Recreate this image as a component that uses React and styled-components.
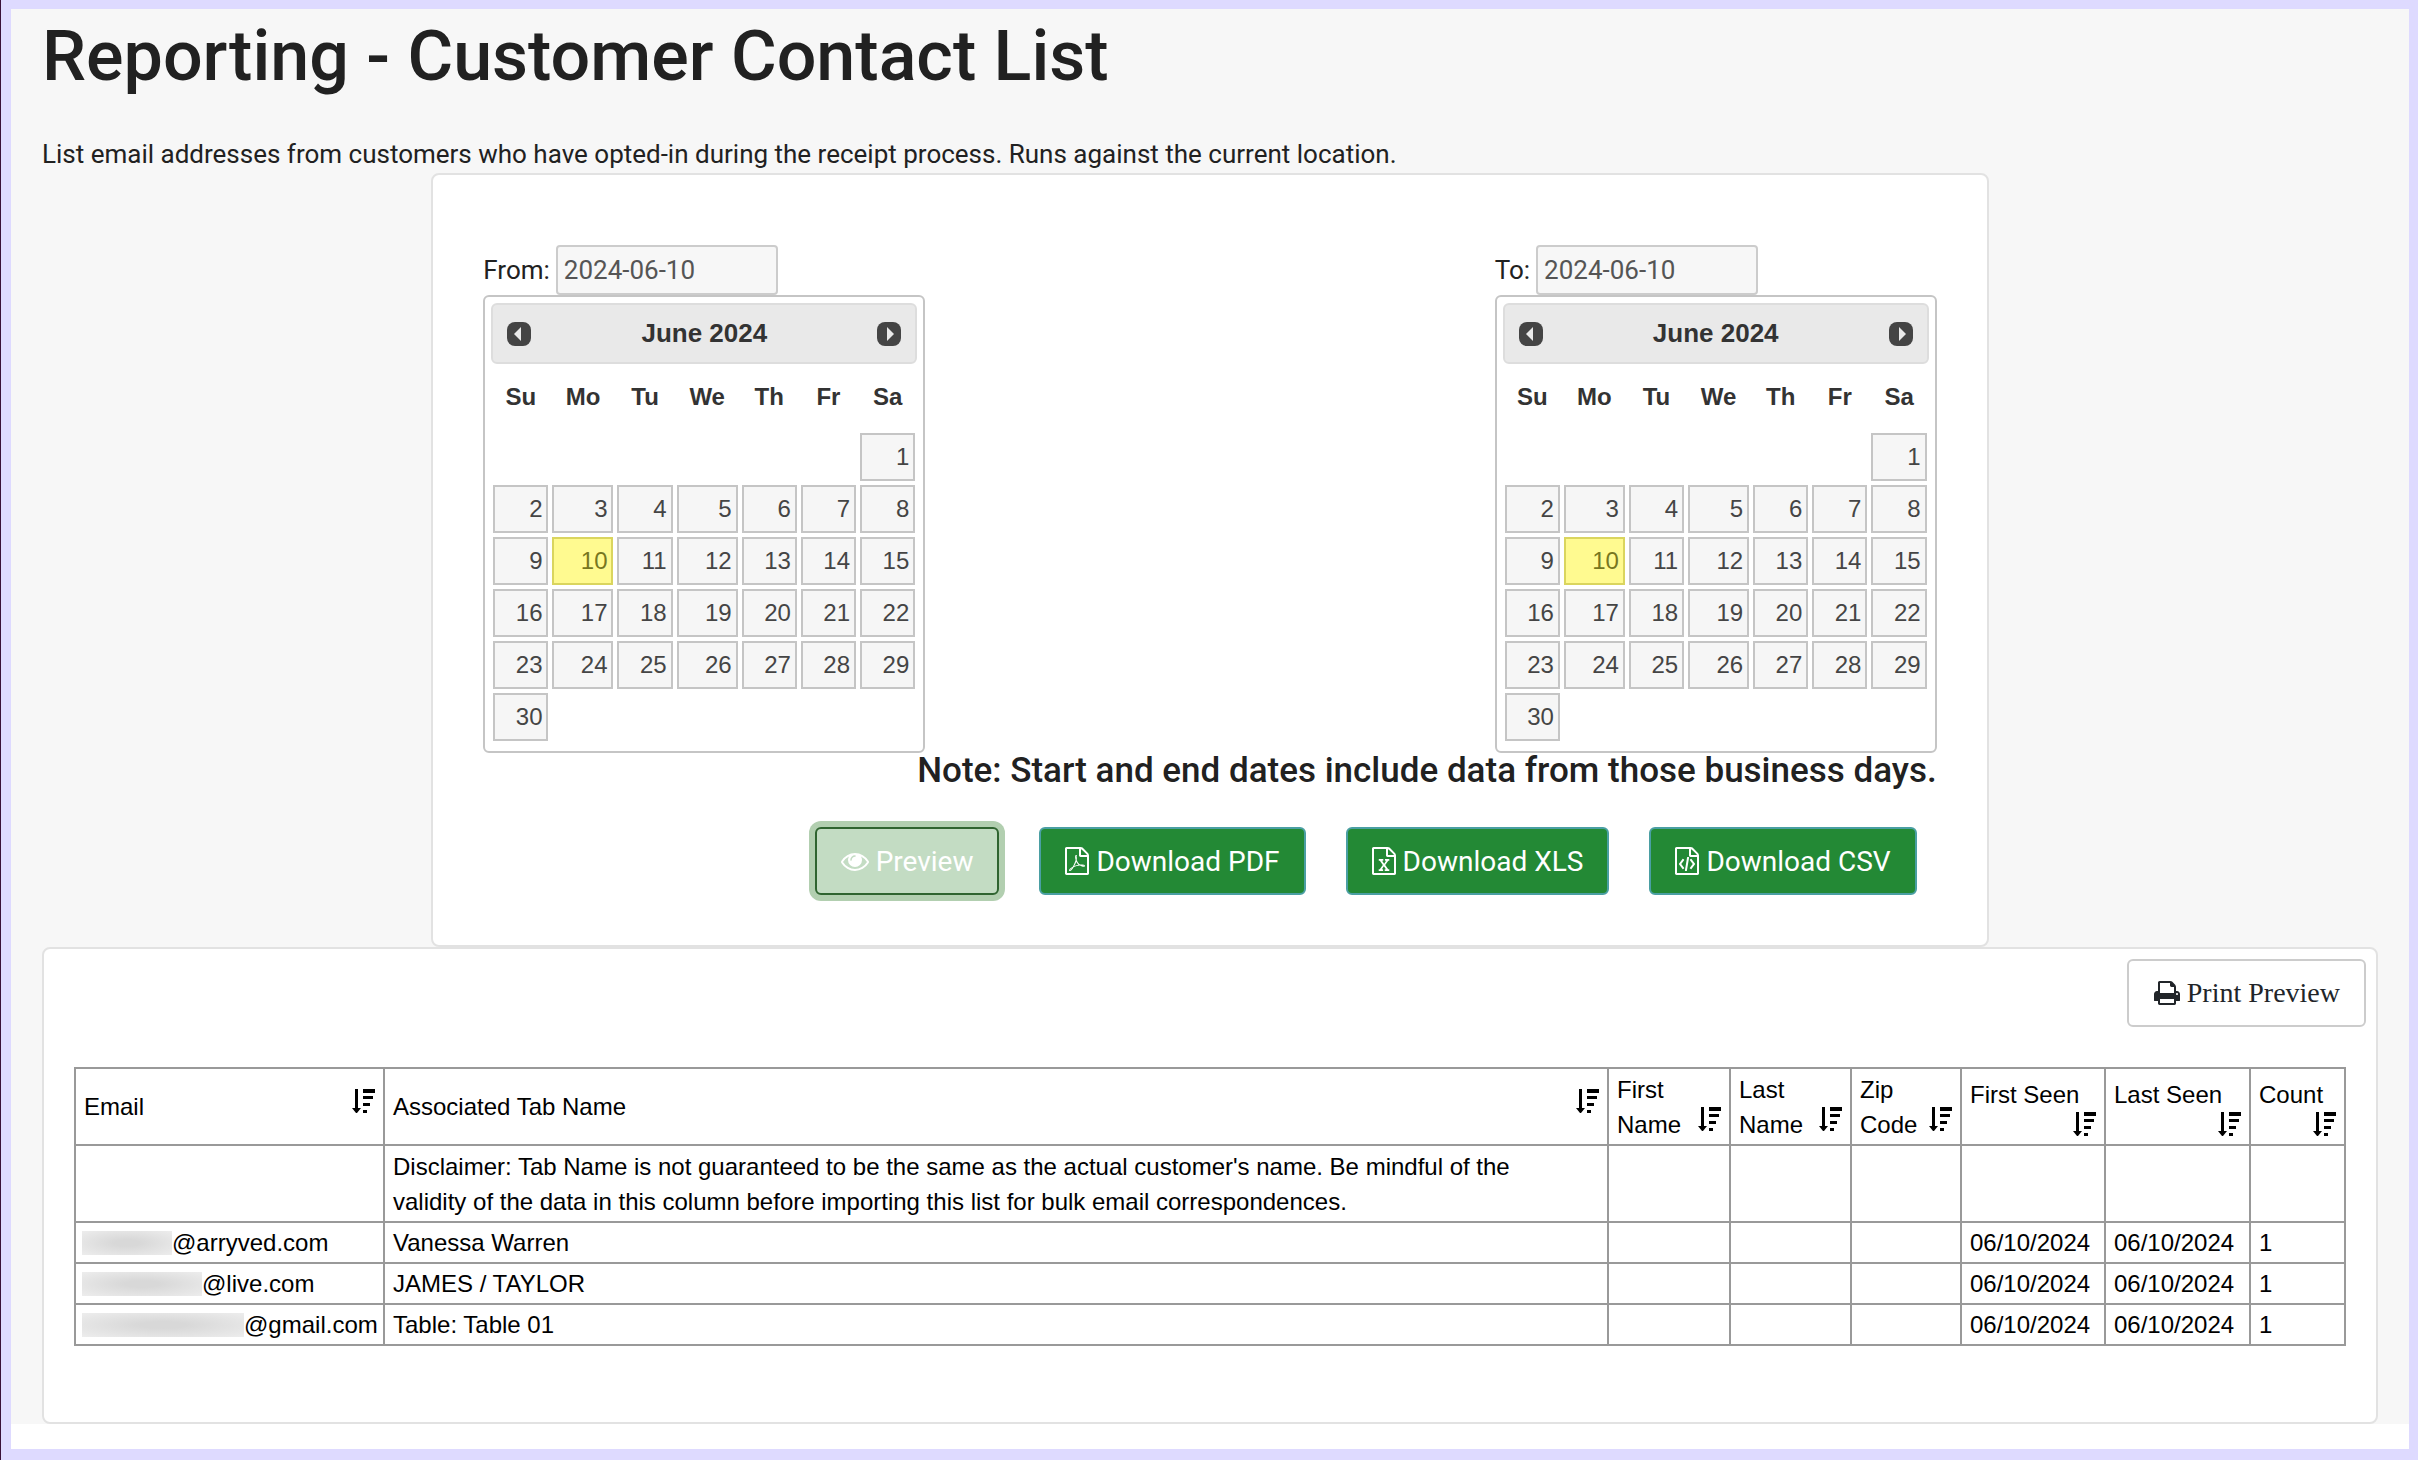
import React, { useState } from 'react'
import styled, { createGlobalStyle, css } from 'styled-components'

const GlobalStyle = createGlobalStyle`
  * {
    box-sizing: border-box;
  }
  body {
    margin: 0;
    background: #3a1038;
    color: #212121;
    font-family: Roboto, "Liberation Sans", sans-serif;
    font-size: 26px;
  }
`

const Frame = styled.div`
  min-height: 100vh;
  margin-left: 1px;
  padding-bottom: 25px;
  border: solid #dedaff;
  border-width: 9px 9px 11px 10px;
  background: #fff;
`

const Page = styled.main`
  padding: 7px 31px 0;
  background: #f7f7f7;
`

const Title = styled.h1`
  margin: 0 0 39px;
  font-size: 70px;
  font-weight: 500;
  line-height: 80px;
`

const Description = styled.p`
  margin: 0;
  line-height: 38px;
`

const Card = styled.section`
  border: 2px solid #e2e2e2;
  border-radius: 8px;
  background: #fff;
`

const FilterCard = styled(Card)`
  width: 66.67%;
  margin: 0 auto;
  padding: 70px 50px 50px;
`

const ResultCard = styled(Card)`
  padding: 10px 10px 76px;
`

const Pickers = styled.div`
  display: flex;
  justify-content: space-between;
`

const Picker = styled.div`
  width: 442px;
`

const Field = styled.div`
  display: flex;
  align-items: center;
  gap: 6px;
  height: 50px;
`

const DateInput = styled.input`
  width: 222px;
  height: 50px;
  padding: 0 6px;
  border: 2px solid #ccc;
  border-radius: 4px;
  background: #f7f7f7;
  color: #555;
  font: inherit;
`

const CalendarBox = styled.div`
  padding: 6px 6px 8px;
  border: 2px solid #c5c5c5;
  border-radius: 6px;
  background: #fff;
  color: #333;
  font-family: "Liberation Sans", Arial, sans-serif;
`

const CalendarHead = styled.div`
  display: flex;
  align-items: center;
  justify-content: space-between;
  height: 61px;
  padding: 0 14px;
  border: 2px solid #ddd;
  border-radius: 6px;
  background: #e9e9e9;
  font-weight: bold;
`

const MonthButton = styled.button`
  display: flex;
  padding: 0;
  border: 0;
  background: none;
`

const Days = styled.table`
  width: 100%;
  margin-top: 6px;
  border-collapse: collapse;
  table-layout: fixed;
  font-size: 24px;

  th {
    height: 61px;
    padding: 0 0 8px;
  }

  td {
    padding: 2px;
  }
`

const DayCol = styled.col`
  width: ${props => props.$wide ? '65px' : 'auto'};
`

const Day = styled.button`
  display: block;
  width: 100%;
  height: 48px;
  padding: 0 4px;
  border: 2px solid #c5c5c5;
  background: #f6f6f6;
  color: #454545;
  font: inherit;
  text-align: right;

  ${props => props.$today && css`
    border-color: #dad55e;
    background: #fffa90;
    color: #777620;
  `}
`

const Note = styled.h4`
  margin: 0;
  font-size: 35px;
  font-weight: 500;
  line-height: 36px;
  text-align: right;
`

const Actions = styled.div`
  display: flex;
  justify-content: flex-end;
  gap: 40px;
  margin-top: 38px;
  padding-right: 20px;
`

const Button = styled.button`
  display: flex;
  align-items: center;
  gap: 7px;
  height: 68px;
  padding: 0 24px;
  border: 2px solid #4a9fa3;
  border-radius: 6px;
  background: #238935;
  color: #fff;
  font-family: inherit;
  font-size: 28px;

  ${props => props.$pressed && css`
    border-color: #2f6430;
    background: #c3dcc3;
    box-shadow: 0 0 0 6px #b2cfb0;
  `}
`

const PrintButton = styled(Button)`
  gap: 6px;
  margin-left: auto;
  border-color: #ccc;
  background: #fff;
  color: #212529;
  font-family: "Liberation Serif", "Times New Roman", serif;
`

const Glyph = styled.svg`
  flex: none;
  fill: currentColor;
`

const TableWrap = styled.div`
  padding: 40px 20px 0;
`

const ReportTable = styled.table`
  width: 100%;
  border-collapse: collapse;
  table-layout: fixed;
  color: #000;
  font-family: "Liberation Sans", Helvetica, Arial, sans-serif;
  font-size: 24px;
  line-height: 35px;

  th, td {
    padding: 2px 8px;
    border: 2px solid #999;
    font-weight: normal;
    text-align: left;
    vertical-align: middle;
  }
`

const Column = styled.col`
  width: ${props => props.$width ? `${props.$width}px` : 'auto'};
`

const TallRow = styled.tr`
  height: 77px;
`

const SortButton = styled.button`
  display: block;
  float: right;
  margin: 0;
  padding: 0;
  border: 0;
  background: none;
  color: #000;
  line-height: 0;
`

const Address = styled.span`
  display: flex;
  align-items: center;
  height: 35px;
  margin: 0 -6px 0 -2px;
`

const Hidden = styled.span`
  flex: none;
  width: ${props => props.$width}px;
  height: 24px;
  background: radial-gradient(ellipse at center, #d8d8d8 20%, #ededed 100%);
`

const SHEET = 'M1596 380q28 28 48 76t20 88v1152q0 40-28 68t-68 28h-1344q-40 0-68-28t-28-68v-1600q0-40 28-68t68-28h896q40 0 88 20t76 48zm-444-244v376h376q-10-29-22-41l-313-313q-12-12-41-22zm384 1528v-1024h-416q-40 0-68-28t-28-68v-416h-768v1536h1280z'

const ICONS = {
  eye: 'M1664 960q-152-236-381-353 61 104 61 225 0 185-131.500 316.500t-316.500 131.500-316.500-131.500-131.500-316.500q0-121 61-225-229 117-381 353 133 205 333.500 326.500t434.500 121.500 434.500-121.500 333.500-326.500zm-720-384q0-20-14-34t-34-14q-125 0-214.500 89.500t-89.500 214.500q0 20 14 34t34 14 34-14 14-34q0-86 61-147t147-61q20 0 34-14t14-34zm848 384q0 34-20 69-140 230-376.500 368.500t-499.500 138.500-499.500-139-376.500-368q-20-35-20-69t20-69q140-229 376.500-368t499.500-139 499.500 139 376.500 368q20 35 20 69z',
  pdf: SHEET + 'm-514-593q33 26 84 56 59-7 117-7 147 0 177 49 16 22 2 52 0 1-1 2l-2 2v1q-6 38-71 38-48 0-115-20t-130-53q-221 24-392 83-153 262-242 262-15 0-28-7l-24-12q-1-1-6-5-10-10-6-36 9-40 56-91.500t132-96.500q14-9 23 6 2 2 2 4 52-85 107-197 68-136 104-262-24-82-30.500-159.500t6.500-127.500q11-40 42-40h22q23 0 35 15 18 21 9 68-2 6-4 8 1 3 1 8v30q-2 123-14 192 55 164 146 238zm-576 411q52-24 137-158-51 40-87.500 84t-49.500 74zm398-920q-15 42-2 132 1-7 7-44 0-3 7-43 1-4 4-8-1-1-1-2t-1-2-1-2q-1-22-13-36 0 1-1 2v2zm-124 661q135-54 284-81-2-1-13-9.500t-16-13.500q-76-67-127-176-27 86-83 197-30 56-45 83zm646-16q-24-24-140-24 76 28 124 28 14 0 18-1 0-1-2-3z',
  xls: SHEET + 'm-979-234v106h281v-106h-75l103-161q5-7 10-16.500t7.500-13.500 3.500-4h2q1 4 5 10 2 4 4.500 7.500t6 8 6.500 8.500l107 161h-76v106h291v-106h-68l-192-273 195-282h67v-107h-279v107h74l-103 159q-4 7-10 16.500t-9 13.500l-2 3h-2q-1-4-5-10-6-11-17-23l-106-159h76v-107h-290v107h68l189 272-194 283h-68z',
  csv: SHEET + 'm-928-896q8-11 21-12.500t24 6.500l51 38q11 8 12.500 21t-6.500 24l-182 243 182 243q8 11 6.500 24t-12.500 21l-51 38q-11 8-24 6.500t-21-12.500l-226-301q-14-19 0-38zm802 301q14 19 0 38l-226 301q-8 11-21 12.500t-24-6.500l-51-38q-11-8-12.500-21t6.500-24l182-243-182-243q-8-11-6.500-24t12.500-21l51-38q11-8 24-6.500t21 12.500zm-620 461q-13-2-20.500-13t-5.500-24l138-831q2-13 13-20.500t24-5.500l63 10q13 2 20.500 13t5.500 24l-138 831q-2 13-13 20.500t-24 5.500z',
  print: 'M448 1536h896v-256h-896v256zm0-640h896v-384h-160q-40 0-68-28t-28-68v-160h-640v640zm1152 64q0-26-19-45t-45-19-45 19-19 45 19 45 45 19 45-19 19-45zm128 0v416q0 13-9.500 22.500t-22.500 9.500h-224v160q0 40-28 68t-68 28h-960q-40 0-68-28t-28-68v-160h-224q-13 0-22.500-9.500t-9.500-22.500v-416q0-79 56.500-135.500t135.500-56.500h64v-544q0-40 28-68t68-28h672q40 0 88 20t76 48l152 152q28 28 48 76t20 88v256h64q79 0 135.500 56.500t56.500 135.500z'
}

// sheets are narrower than the eye and the printer, so their box is cropped
const Icon = ({ name, narrow }) => (
  <Glyph
    width={narrow ? 24 : 28}
    height='28'
    viewBox={narrow ? '128 0 1536 1792' : '0 0 1792 1792'}
    aria-hidden='true'
  >
    <path d={ICONS[name]} />
  </Glyph>
)

const SortIcon = () => (
  <Glyph width='23' height='24' viewBox='0 0 23 24' aria-hidden='true'>
    <path d='M3 0h3v19h3l-4 5h-1l-4-5h3zM11 0h12v4h-12zM11 7h10v3h-10zM11 14h7v3h-7zM11 21h4v3h-4z' />
  </Glyph>
)

const ArrowIcon = ({ next }) => (
  <Glyph width='24' height='24' viewBox='0 0 24 24' aria-hidden='true'>
    <rect width='24' height='24' rx='8' fill='#444' />
    <path d={next ? 'M10 5v14l7-7z' : 'M14 5v14l-7-7z'} fill='#e9e9e9' />
  </Glyph>
)

const WEEKDAYS = ['Su', 'Mo', 'Tu', 'We', 'Th', 'Fr', 'Sa']

const WEEKS = [0, 1, 2, 3, 4, 5].map(week =>
  WEEKDAYS.map((name, i) => {
    const day = week * 7 + i - 5
    return day > 0 && day <= 30 ? day : null
  })
)

function Calendar () {
  return (
    <CalendarBox>
      <CalendarHead>
        <MonthButton type='button' aria-label='Prev'><ArrowIcon /></MonthButton>
        <span>June 2024</span>
        <MonthButton type='button' aria-label='Next'><ArrowIcon next /></MonthButton>
      </CalendarHead>
      <Days>
        <colgroup>
          {WEEKDAYS.map(name => <DayCol key={name} $wide={name === 'Mo' || name === 'We'} />)}
        </colgroup>
        <thead>
          <tr>{WEEKDAYS.map(name => <th key={name} scope='col'>{name}</th>)}</tr>
        </thead>
        <tbody>
          {WEEKS.map((week, i) => (
            <tr key={i}>
              {week.map((day, j) => (
                <td key={j}>
                  {day && <Day type='button' $today={day === 10}>{day}</Day>}
                </td>
              ))}
            </tr>
          ))}
        </tbody>
      </Days>
    </CalendarBox>
  )
}

function DatePicker ({ id, label }) {
  const [date, setDate] = useState('2024-06-10')

  return (
    <Picker>
      <Field>
        <label htmlFor={id}>{label}</label>
        <DateInput id={id} type='text' value={date} onChange={e => setDate(e.target.value)} />
      </Field>
      <Calendar />
    </Picker>
  )
}

const COLUMNS = [
  { name: 'Email', width: 309 },
  { name: 'Associated Tab Name' },
  { name: 'First Name', width: 122 },
  { name: 'Last Name', width: 121 },
  { name: 'Zip Code', width: 110 },
  { name: 'First Seen', width: 144 },
  { name: 'Last Seen', width: 145 },
  { name: 'Count', width: 95 }
]

const ROWS = [
  { hidden: 90, domain: '@arryved.com', tab: 'Vanessa Warren' },
  { hidden: 120, domain: '@live.com', tab: 'JAMES / TAYLOR' },
  { hidden: 162, domain: '@gmail.com', tab: 'Table: Table 01' }
]

function Report () {
  return (
    <ReportTable>
      <colgroup>
        {COLUMNS.map(col => <Column key={col.name} $width={col.width} />)}
      </colgroup>
      <thead>
        <TallRow>
          {COLUMNS.map(col => (
            <th key={col.name} scope='col'>
              {col.name}
              <SortButton type='button' aria-label={`Sort by ${col.name}`}><SortIcon /></SortButton>
            </th>
          ))}
        </TallRow>
      </thead>
      <tbody>
        <TallRow>
          <td />
          <td>
            Disclaimer: Tab Name is not guaranteed to be the same as the actual customer's name. Be mindful of the
            <br />
            validity of the data in this column before importing this list for bulk email correspondences.
          </td>
          <td /><td /><td /><td /><td /><td />
        </TallRow>
        {ROWS.map(row => (
          <tr key={row.tab}>
            <td><Address><Hidden $width={row.hidden} />{row.domain}</Address></td>
            <td>{row.tab}</td>
            <td /><td /><td />
            <td>06/10/2024</td>
            <td>06/10/2024</td>
            <td>1</td>
          </tr>
        ))}
      </tbody>
    </ReportTable>
  )
}

function App () {
  return (
    <Frame>
      <GlobalStyle />
      <Page>
        <Title>Reporting - Customer Contact List</Title>
        <Description>
          List email addresses from customers who have opted-in during the receipt process. Runs against the current location.
        </Description>
        <FilterCard>
          <Pickers>
            <DatePicker id='from' label='From:' />
            <DatePicker id='to' label='To:' />
          </Pickers>
          <Note>Note: Start and end dates include data from those business days.</Note>
          <Actions>
            <Button type='button' $pressed><Icon name='eye' />Preview</Button>
            <Button type='button'><Icon name='pdf' narrow />Download PDF</Button>
            <Button type='button'><Icon name='xls' narrow />Download XLS</Button>
            <Button type='button'><Icon name='csv' narrow />Download CSV</Button>
          </Actions>
        </FilterCard>
        <ResultCard>
          <PrintButton type='button'><Icon name='print' />Print Preview</PrintButton>
          <TableWrap>
            <Report />
          </TableWrap>
        </ResultCard>
      </Page>
    </Frame>
  )
}

export default App
